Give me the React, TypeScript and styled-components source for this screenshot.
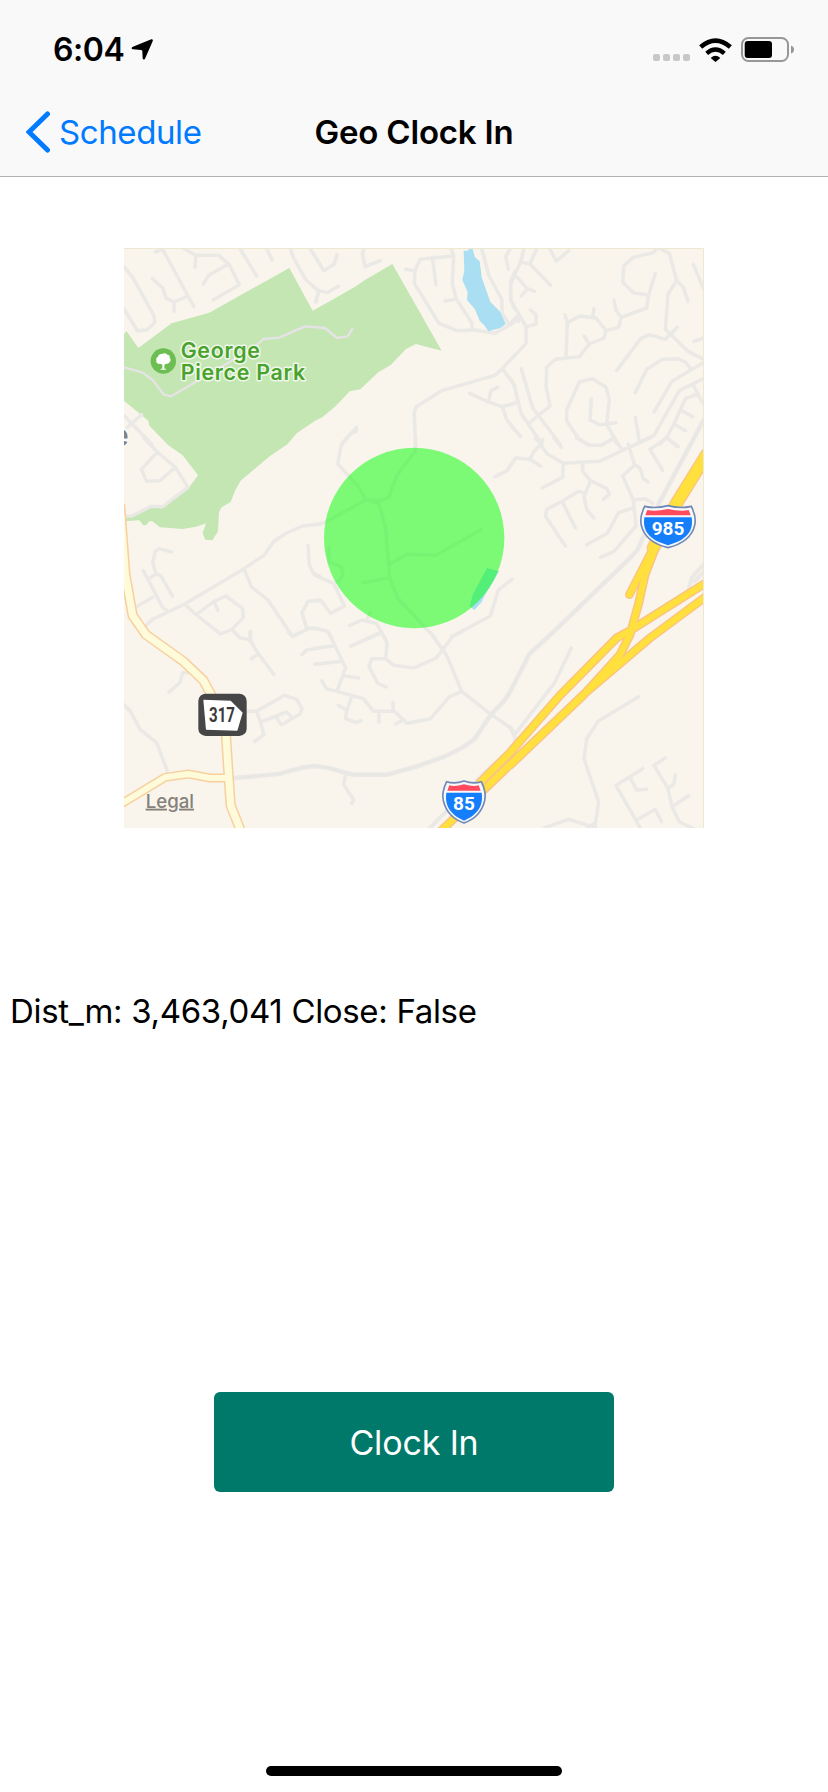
import React from 'react';
import styled, { createGlobalStyle } from 'styled-components';

const GlobalStyle = createGlobalStyle`
  * { box-sizing: border-box; }
  body { margin: 0; background: #fff; }
`;

const Screen = styled.div`
  display: flex;
  flex-direction: column;
  width: 828px;
  height: 1792px;
  background: #fff;
  color: #000;
  font-family: Inter, 'Liberation Sans', sans-serif;
  font-size: 33px;
  line-height: 40px;
`;

const Header = styled.header`
  flex: none;
  height: 177px;
  background: #f9f9f9;
  border-bottom: 1px solid #b2b2b2;
`;

const StatusBar = styled.div`
  display: flex;
  align-items: flex-start;
  justify-content: space-between;
  height: 88px;
  padding: 30px 34px 0 53px;
`;

const StatusGroup = styled.div<{ $gap: number }>`
  display: flex;
  align-items: center;
  gap: ${(p) => p.$gap}px;
  height: 39px;
`;

const Time = styled.span`
  font-size: 32px;
  font-weight: 600;
  letter-spacing: -0.4px;
`;

const SignalDots = styled.div`
  display: flex;
  gap: 3px;
  margin-top: 16px;
`;

const Dot = styled.i`
  width: 7px;
  height: 7px;
  border-radius: 2px;
  background: #c8c8c8;
`;

const Glyph = styled.svg`
  display: block;
  flex: none;
`;

const NavBar = styled.nav`
  display: grid;
  grid-template-columns: 1fr auto 1fr;
  align-items: center;
  height: 88px;
  padding: 0 26px;
`;

const BackButton = styled.a`
  display: flex;
  align-items: center;
  gap: 8px;
  color: #007aff;
  letter-spacing: -0.4px;
`;

const Title = styled.h1`
  margin: 0;
  font-size: 33px;
  font-weight: 600;
  letter-spacing: -0.2px;
`;

const Content = styled.main`
  display: flex;
  flex: 1;
  flex-direction: column;
  align-items: center;
  padding-top: 71px;
`;

const MapView = styled.svg`
  display: block;
  width: 580px;
  height: 580px;
  flex: none;
`;

const Distance = styled.p`
  align-self: stretch;
  margin: 163px 0 0;
  padding-left: 10px;
  letter-spacing: -0.33px;
`;

const ClockInButton = styled.button`
  width: 400px;
  height: 100px;
  margin-top: 361px;
  padding: 1px 0 0;
  border: 0;
  border-radius: 6px;
  background: #00796b;
  color: #fff;
  font: inherit;
  font-size: 34px;
  letter-spacing: -0.15px;
`;

const HomeIndicator = styled.div`
  width: 296px;
  height: 10px;
  margin: auto 0 16px;
  border-radius: 5px;
  background: #000;
`;

/* Minor streets, grouped by map sector: [column offset, row offset, path]. */
const streets: [number, number, string][] = [
  [0, 0, 'M12 68L38 100L102 215L104 236L80 258L52 260L12 195M106 24L128 16L204 156L222 188M204 156L162 174L138 162L128 132L97 104M162 174V202M192 14L228 34H296L328 62L358 122L280 168M228 34L225 70M322 62L266 94L250 120M360 14L410 96M440 14L456 48M512 14L518 36L555 104L594 140M596 140L588 172M570 14L600 60M12 515L95 600M65 512L22 550'],
  [585, 0, 'M-5 28L26 80L58 60L66 32M-5 128L12 140L36 146L70 127M12 140L2 174M148 14L142 28L150 68L196 50M408 14L416 36L412 120L424 165L470 236L472 258M424 165L390 171M416 36L316 46L300 78L298 118L372 238L426 260L480 258L540 268L590 240L600 232M300 80L272 76M352 40L363 122M500 14L522 96L560 165L562 210L582 240M585 14L572 38L580 76M600 82L587 112V168L600 196M600 332L562 374L540 394L380 440L304 488L298 505L302 622M562 374L600 426M464 448L520 474L562 488L600 478M520 474L528 440L548 430M562 488L574 524L600 560M124 550L80 600M124 552V562L108 568'],
  [1170, 0, 'M42 14L32 54L14 92L2 124V168L48 248V298L0 350M14 92L52 134L34 156M52 134L74 142M32 54L60 60L122 124M60 60L80 14M120 14L138 52L176 20M48 248L78 240V212L62 198M0 240L22 216L26 232M440 14L430 26L370 40L342 64L338 114L370 146L416 154L436 88M416 154L410 192L334 220L326 250L288 260L258 222L210 216L172 236L168 340M172 236L165 212M248 218L252 194M288 260L282 282L238 300L208 338L136 346L110 370L108 428L120 486L56 538M238 300L222 276M334 220L318 200L312 168M450 14L478 28L500 110L474 150L466 256L534 322L578 344M500 110L520 130L534 172M320 380L392 284L418 272L466 286L502 250M550 62L580 132M552 292L580 282M376 446L410 376L458 346L502 344L526 354L544 376M432 504L486 412L580 356M580 404L508 440L432 574L340 618M388 592L376 520M550 424L578 476M564 450L526 464L492 540L470 580L450 600M516 500L548 518M492 540L526 560M470 580L504 608M34 374L68 492L150 600M0 402L14 430L34 510L96 600M0 482L20 474M0 540L32 578M318 536L268 542L240 528L244 464M290 540L298 466L288 430L248 404L208 414L170 498V530L206 584L240 604M290 540L322 600M314 580L274 604'],
  [0, 582, 'M72 0L112 42L64 94L80 130L120 128L166 88L112 42M166 88L204 148L128 206L92 205L36 234H12M600 258L548 264L500 285L462 310L432 352L372 392L194 498L98 544L68 570M372 392L394 446L444 486L518 596L570 570L600 574M154 342L118 332L106 340L98 374L108 408L122 412L157 474M108 408L90 420M70 398L128 508L145 520M98 478L46 508M194 498L228 530L302 588L336 574L370 538L368 512L318 474L282 490L228 530M282 490L294 518M336 574L360 600M392 580V606M564 322L568 380L580 406L600 416M600 488L564 490L546 524L560 572'],
  [585, 582, 'M95 0L78 24L68 78L130 145L152 186H205L222 176L246 112L302 38V0M152 186L28 254L0 260M152 186L192 196L212 270L224 418L248 480L332 570L360 600M224 378L276 348L362 352L498 275M218 420L143 434M42 330V370L80 388L84 412L68 432L56 436M0 412L56 436L88 504L46 526L18 487H0M104 562L140 546L184 556L210 600M155 546L165 524M0 570L38 580L50 600M108 624L196 584M540 116L576 98L600 62M590 425L550 456L526 534L410 596'],
  [1170, 582, 'M0 84L18 60L60 64L72 40L92 20L76 0M92 20L98 4M92 20L112 48L160 76L268 70L340 36L420 0M60 64L92 84M160 76L158 118L96 150M132 0L154 28M200 0L236 22H274L310 2L338 36M310 2V-6L330 26M354 18L374 80L338 114L370 186L378 264L312 340L272 358M374 80L390 90L400 122L414 132M370 186L406 182L428 196M370 210L326 224L292 286L230 320M218 76V100L242 128L290 152L298 168L280 184M242 128L222 176L230 214L252 240M222 164L206 160L156 190L110 214L106 234L166 324M156 190L196 270M458 98L420 34L470 0L504 26M0 430L6 424'],
  [0, 1164, 'M12 218L30 236L60 292L110 332L142 418M220 122L188 122L180 152L147 180M342 0L358 16L390 24V0M390 24L416 66L462 128M416 66L394 80M505 0L515 12L545 0M600 48L560 54L546 68M600 96H586M375 238H410L494 190L530 202L546 230L540 246L484 278L470 258M410 238L422 272L432 308L404 328M422 270L500 240L518 258'],
  [585, 1164, 'M40 0L92 108L66 176M0 48L54 42M0 97L80 88M90 132L130 138M20 146L34 170L66 178L145 200L176 238H238L276 274L346 260L404 194L440 178L395 70L345 0M440 178L524 244L590 290L600 320V350M266 264L242 276M192 240V270M234 212V238M110 195L94 240L92 260L122 272L138 266M94 234L70 220M108 42L200 2L216 32L212 80H170L162 104L188 154L214 165M212 80L236 100L296 108L364 78L414 12L440 0M92 425L86 458L116 504L110 514'],
  [1170, 1164, 'M184 48L134 152L14 308M0 284L16 318L10 345M386 194L264 268L230 320L222 380L266 510L254 587M104 587L176 562L256 587M234 587L256 572M398 410L318 460L390 587M360 436L380 474L410 472M380 564L436 532L454 568M466 378L432 400L474 470L486 524L508 570L556 592M474 470L492 455L496 430M486 524L535 492'],
];

const parkway =
  'M1750 530L1620 772L1552 918L1530 942L1300 1164L1228 1230L1170 1344L1150 1374L1115 1409L1063 1486L1025 1512L970 1539L885 1569L800 1592H700L625 1572L585 1566L550 1570L475 1590L345 1602';

const park =
  'M12 270L20 262L55 312L155 238L268 206L508 72L578 200L645 163L705 128L735 108L817 60L965 320L887 300L857 316L813 362L773 386L721 436L689 442L645 488L607 520L585 530L530 568L503 600L450 636L362 710L345 740L332 774L305 790L297 804L294 862L277 889L256 887L248 868L258 838L228 848L188 855L120 850L97 832H88L78 844H70L58 829L12 832V819L36 818L92 790L128 792L206 732L234 694L188 634L145 604L88 545L85 530L12 470Z';

const stateRoad = 'M0 780L16 990L38 1115L78 1172L190 1252L250 1309L285 1374L318 1474L325 1584L332 1684L362 1760';
const stateBranch = 'M325 1602H270L205 1590L135 1600L0 1682';

const interstates =
  'M1610 902L1575 992L1555 1082L1530 1172L1500 1232L1390 1354L1170 1564M1760 1015L1530 1160L1490 1182L1320 1354L1170 1526L1080 1616M1760 1056L1590 1182L1390 1352L1170 1562L1095 1634L960 1764';
const interstateRamp = 'M1600 912L1528 1052';
const interstateWide = 'M1760 632L1670 777L1600 912';

function Shield({ x, y, half, label }: { x: number; y: number; half: number; label: string }) {
  const h = half;
  return (
    <g transform={`translate(${x} ${y})`}>
      <path
        d={`M${-h + 12} 5Q${-h / 2 + 4} 13 0 3Q${h / 2 - 4} 13 ${h - 12} 5Q${h + 4} 38 ${h - 2} 62Q${h - 14} 112 0 129Q${-h + 14} 112 ${-h + 2} 62Q${-h - 4} 38 ${-h + 12} 5Z`}
        fill="#f7f8fb"
        stroke="#7189b5"
        strokeWidth="5"
      />
      <path d={`M${-h + 20} 16Q${-h / 2 + 4} 21 0 13Q${h / 2 - 4} 21 ${h - 20} 16L${h - 14} 32H${-h + 14}Z`} fill="#ff4b5d" />
      <path d={`M${-h + 11} 38H${h - 11}C${h - 4} 86 ${h - 34} 108 0 122C${-h + 34} 108 ${-h + 4} 86 ${-h + 11} 38Z`} fill="#147efb" />
      <text y="90" textAnchor="middle" fontFamily="Roboto, sans-serif" fontSize="57" fontWeight="700" fill="#fff">
        {label}
      </text>
    </g>
  );
}

function GeoMap() {
  return (
    <MapView viewBox="12 12 1740 1740" fontFamily="Inter, sans-serif" role="img" aria-label="Job site map">
      <rect x="12" y="12" width="1740" height="1740" fill="#f9f4ec" />
      <path d={park} fill="#c3e6b3" />

      <g fill="none" stroke="#ebe9e6" strokeWidth="10.5" strokeLinecap="round" strokeLinejoin="round">
        {streets.map(([dx, dy, d]) => (
          <path key={`${dx}-${dy}`} d={d} transform={`translate(${dx} ${dy})`} />
        ))}
        <path d={parkway} strokeWidth="14" />
        <path d={parkway} stroke="#e5e4e2" strokeWidth="2" />
        <path d="M1190 1500L1100 1580L925 1756M1752 960L1716 1000L1706 1036M1752 982L1724 1012" strokeWidth="12" />
        <path
          d="M12 370L68 386L98 408L132 452L154 457L400 312L430 285L478 281L555 247L615 252L651 282L683 277L697 255"
          stroke="#e6e3e6"
          strokeWidth="7"
        />
      </g>

      <g fill="#a9def3">
        <path d="M1031 20L1045 20L1047 12H1057L1065 40L1079 52L1085 100L1111 174L1141 204L1157 240L1141 252L1105 262L1093 244L1079 230L1065 196L1041 168L1043 144L1027 108L1033 80Z" />
        <path d="M1101 972L1137 982L1113 1024L1095 1052L1085 1074L1063 1098L1049 1087L1059 1050Z" />
      </g>

      <g fill="none" strokeLinejoin="round">
        <path d={stateRoad} stroke="#f8d0a0" strokeWidth="31" />
        <path d={stateBranch} stroke="#f8d0a0" strokeWidth="27" />
        <path d={stateRoad} stroke="#fdfbd9" strokeWidth="22" />
        <path d={stateBranch} stroke="#fdfbd9" strokeWidth="18" />
      </g>

      <g fill="none" strokeLinejoin="round" strokeLinecap="round">
        <path d={interstates} stroke="#fbc481" strokeWidth="27" />
        <path d={interstateRamp} stroke="#fbc481" strokeWidth="26" />
        <path d={interstateWide} stroke="#fbc481" strokeWidth="40" />
        <path d={interstates} stroke="#ffe03c" strokeWidth="18" />
        <path d={interstateRamp} stroke="#ffe03c" strokeWidth="18" />
        <path d={interstateWide} stroke="#ffe03c" strokeWidth="32" />
      </g>

      <circle cx="882.5" cy="882" r="270.5" fill="#00ff00" fillOpacity="0.5" />

      <Shield x={1644} y={782} half={82} label="985" />
      <Shield x={1032} y={1608} half={64} label="85" />

      <rect x="235" y="1349" width="145" height="127" rx="22" fill="#464646" />
      <path d="M250 1367L332 1370L368 1406L352 1460L258 1457Z" fill="#fff" />
      <text
        transform="translate(306 1434) scale(0.78 1)"
        textAnchor="middle"
        fontFamily="Roboto, sans-serif"
        fontSize="58"
        fontWeight="700"
        fill="#3a3a3a"
      >
        317
      </text>

      <circle cx="130" cy="351" r="38" fill="#6cbd52" />
      <path
        d="M127 374V362Q121 358 117 360Q107 358 109 349Q107 341 114 338Q116 329 126 330Q135 325 142 332Q151 333 149 341Q155 348 149 354Q146 361 139 359L133 362V374H138V377H122V374Z"
        fill="#fff"
      />
      <g
        fill="#48a22c"
        stroke="#f0f8ea"
        strokeWidth="9"
        strokeLinejoin="round"
        paintOrder="stroke"
        fontSize="64"
        fontWeight="600"
        letterSpacing="2.2"
      >
        <text x="182" y="341">George</text>
        <text x="182" y="408">Pierce Park</text>
      </g>

      <text x="26" y="606" textAnchor="end" fontSize="90" fontWeight="600" fill="#85817c" stroke="#fff" strokeWidth="6" paintOrder="stroke">
        e
      </text>
      <text x="77" y="1691" fontSize="56" fontWeight="500" fill="#85817a" textDecoration="underline">
        Legal
      </text>

      <path d="M12 13.5H1750.5V1752" fill="none" stroke="#efe8d0" strokeWidth="3" />
    </MapView>
  );
}

export default function App() {
  return (
    <Screen>
      <GlobalStyle />
      <Header>
        <StatusBar>
          <StatusGroup $gap={6}>
            <Time>6:04</Time>
            <Glyph width="22" height="21" viewBox="392 118 66 63">
              <path d="M453 119Q459 118 457 125L434 177Q429 183 427 176L426 154Q425 151 422 151L398 149Q391 147 396 142Z" />
            </Glyph>
          </StatusGroup>
          <StatusGroup $gap={9}>
            <SignalDots>
              <Dot />
              <Dot />
              <Dot />
              <Dot />
            </SignalDots>
            <Glyph width="33" height="24" viewBox="855 111 99 72" fill="none" stroke="#000">
              <path d="M860 138Q904.500 100 949 138" strokeWidth="14" />
              <path d="M878 157Q904.500 134 931 157" strokeWidth="13" />
              <path d="M890 171Q904.500 158 919 171L904.500 183Z" fill="#000" stroke="none" />
            </Glyph>
            <Glyph width="53" height="25" viewBox="0 0 53 25">
              <rect x="1" y="1" width="46" height="23" rx="6.500" fill="none" stroke="#979797" strokeWidth="2" />
              <rect x="3.700" y="4" width="27.300" height="17" rx="3" />
              <path d="M50 8.500Q53 9.500 53 12.500T50 16.500Z" fill="#979797" />
            </Glyph>
          </StatusGroup>
        </StatusBar>
        <NavBar>
          <BackButton>
            <Glyph width="25" height="42" viewBox="0 0 25 42">
              <path d="M21.500 3L3 21L21.500 39" fill="none" stroke="#007aff" strokeWidth="5" strokeLinecap="round" />
            </Glyph>
            Schedule
          </BackButton>
          <Title>Geo Clock In</Title>
        </NavBar>
      </Header>
      <Content>
        <GeoMap />
        <Distance>Dist_m: 3,463,041 Close: False</Distance>
        <ClockInButton>Clock In</ClockInButton>
        <HomeIndicator />
      </Content>
    </Screen>
  );
}
